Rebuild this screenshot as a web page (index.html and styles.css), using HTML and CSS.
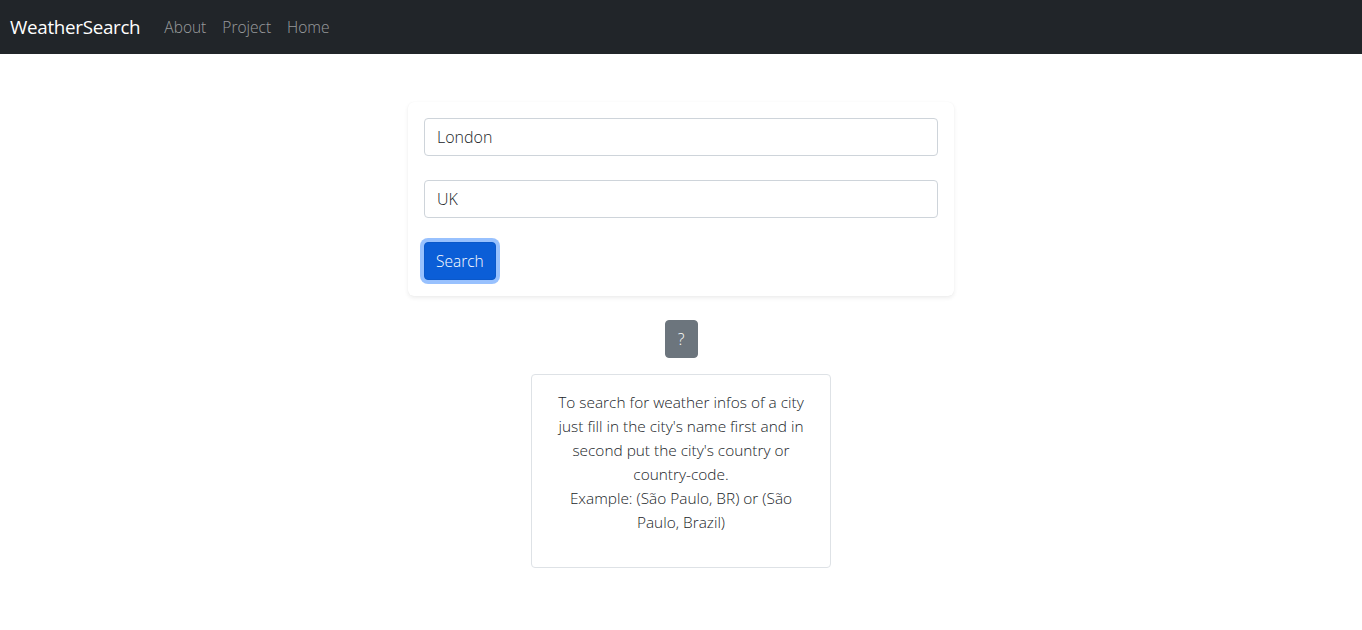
FILE: index.html
```html
<!DOCTYPE html>
<html lang="en">
<head>
<meta charset="utf-8">
<title>WeatherSearch</title>
<link rel="stylesheet" href="styles.css">
</head>
<body>
<nav class="navbar">
  <a class="brand" href="#">WeatherSearch</a>
  <ul class="nav-links">
    <li><a href="#">About</a></li>
    <li><a href="#">Project</a></li>
    <li><a href="#">Home</a></li>
  </ul>
</nav>
<main class="main">
  <form class="search-card">
    <input class="field" type="text" value="London">
    <input class="field" type="text" value="UK">
    <div class="actions"><button class="btn-search" type="button">Search</button></div>
  </form>
  <button class="btn-help" type="button">?</button>
  <div class="help-box">
    <p>To search for weather infos of a city<br>just fill in the city's name first and in<br>second put the city's country or<br>country-code.<br>Example: (São Paulo, BR) or (São<br>Paulo, Brazil)</p>
  </div>
</main>
</body>
</html>
```

FILE: styles.css
```css
* { box-sizing: border-box; }
html, body { margin: 0; padding: 0; }
body {
  font-family: "Open Sans", "Liberation Sans", sans-serif;
  font-weight: 300;
  font-size: 16px;
  line-height: 24px;
  color: #212529;
  background: #fff;
}
.navbar {
  height: 54px;
  background: #212529;
  display: flex;
  align-items: center;
  padding: 0 10px;
}
.brand {
  color: #fff;
  text-decoration: none;
  font-size: 18.8px;
  font-weight: 400;
  letter-spacing: -0.3px;
  margin-right: 16px;
}
.nav-links {
  list-style: none;
  margin: 0;
  padding: 0;
  display: flex;
}
.nav-links a {
  display: block;
  padding: 8px 8px;
  color: rgba(255,255,255,.55);
  text-decoration: none;
  font-size: 15.5px;
}
.main {
  display: flex;
  flex-direction: column;
  align-items: center;
  padding-top: 48px;
}
.search-card {
  width: 546px;
  padding: 16px;
  border-radius: 6px;
  box-shadow: 0 .125rem .25rem rgba(0,0,0,.075), 0 0 1px rgba(0,0,0,.05);
  display: flex;
  flex-direction: column;
  gap: 24px;
  background: #fff;
}
.field {
  display: block;
  width: 100%;
  height: 38px;
  padding: 6px 12px;
  font-family: inherit;
  font-weight: 300;
  font-size: 16px;
  color: #212529;
  border: 1px solid #ced4da;
  border-radius: 4px;
  background: #fff;
}
.actions { display: flex; }
.btn-search {
  height: 38px;
  padding: 6px 11px;
  font-family: inherit;
  font-weight: 300;
  font-size: 15.5px;
  color: #fff;
  background: #0b5ed7;
  border: 1px solid #0a58ca;
  border-radius: 4px;
  box-shadow: 0 0 0 4px rgba(49,132,253,.5);
}
.btn-help {
  margin-top: 24px;
  width: 33px;
  height: 38px;
  padding: 0;
  font-family: inherit;
  font-weight: 300;
  font-size: 16px;
  color: #fff;
  background: #6c757d;
  border: 1px solid #6c757d;
  border-radius: 4px;
}
.help-box {
  margin-top: 16px;
  width: 300px;
  padding: 16px 8px;
  border: 1px solid #dee2e6;
  border-radius: 4px;
  text-align: center;
}
.help-box p {
  margin: 0 0 16px;
  white-space: nowrap;
  font-size: 15.4px;
}
```
